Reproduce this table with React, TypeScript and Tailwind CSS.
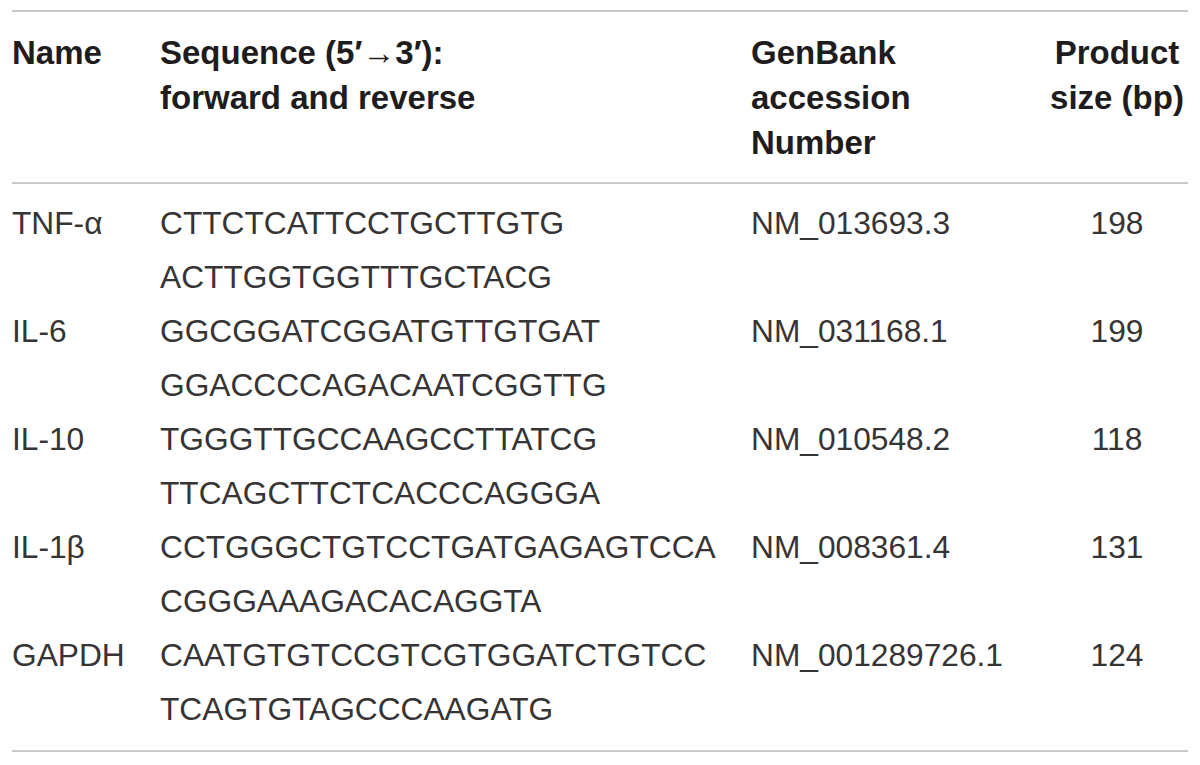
import React from "react"

const rows = [
  { name: "TNF-α", fwd: "CTTCTCATTCCTGCTTGTG", rev: "ACTTGGTGGTTTGCTACG", acc: "NM_013693.3", size: "198" },
  { name: "IL-6", fwd: "GGCGGATCGGATGTTGTGAT", rev: "GGACCCCAGACAATCGGTTG", acc: "NM_031168.1", size: "199" },
  { name: "IL-10", fwd: "TGGGTTGCCAAGCCTTATCG", rev: "TTCAGCTTCTCACCCAGGGA", acc: "NM_010548.2", size: "118" },
  { name: "IL-1β", fwd: "CCTGGGCTGTCCTGATGAGAGTCCA", rev: "CGGGAAAGACACAGGTA", acc: "NM_008361.4", size: "131" },
  { name: "GAPDH", fwd: "CAATGTGTCCGTCGTGGATCTGTCC", rev: "TCAGTGTAGCCCAAGATG", acc: "NM_001289726.1", size: "124" }
]

const cols = "grid grid-cols-[148px_591px_295px_142px]"

const App = () => {
  return (
    <div className="w-[1200px] h-[765px] bg-white px-[12px] pt-[10px] font-['Liberation_Sans',Arial,sans-serif]">
      <div className="border-t-2 border-b-2 border-[#cacaca]">
        {/* header */}
        <div className={`${cols} py-[17.5px] text-[33px] leading-[45px] font-bold text-[#1f1c1d]`}>
          <div>Name</div>
          <div>
            Sequence (5′→3′):
            <br />
            forward and reverse
          </div>
          <div>
            GenBank
            <br />
            accession
            <br />
            Number
          </div>
          <div className="text-center">
            Product
            <br />
            size (bp)
          </div>
        </div>
      </div>

      <div className="border-b-2 border-[#cacaca] pt-[12px] pb-[14px] text-[31.7px] leading-[54px] text-[#363435]">
        {rows.map(r => (
          <div key={r.name} className={cols}>
            <div>{r.name}</div>
            <div>
              <div>{r.fwd}</div>
              <div>{r.rev}</div>
            </div>
            <div>{r.acc}</div>
            <div className="text-center">{r.size}</div>
          </div>
        ))}
      </div>
    </div>
  )
}

export default App
